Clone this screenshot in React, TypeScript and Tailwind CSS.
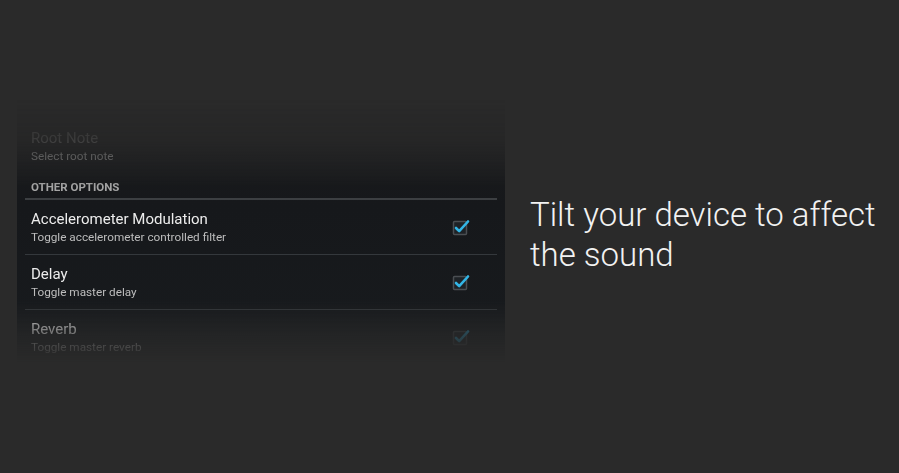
import React from "react";

const CheckBox = ({ dim = false }: { dim?: boolean }) => (
  <svg width="20" height="20" viewBox="0 0 20 20" className={dim ? "opacity-60" : ""}>
    <rect x="1.5" y="4.5" width="13" height="13" rx="1" fill="#1e2226" stroke="#4a4e52" strokeWidth="1.5" />
    <path d="M4 11l3.2 3.2L16 4.5" fill="none" stroke="#33b5e5" strokeWidth="2.6" strokeLinecap="round" strokeLinejoin="round" />
  </svg>
);

const rows = [
  { title: "Accelerometer Modulation", sub: "Toggle accelerometer controlled filter" },
  { title: "Delay", sub: "Toggle master delay" },
  { title: "Reverb", sub: "Toggle master reverb" },
];

export default function App() {
  return (
    <div className="h-[473px] w-full bg-[#2a2a2a] flex font-[Roboto,sans-serif] overflow-hidden">
      {/* settings panel */}
      <div className="ml-[17px] mt-[100px] w-[488px] h-[265px] bg-[linear-gradient(to_bottom,#1b1b1c_0%,#16181b_40%,#181b1e_100%)] [mask-image:linear-gradient(to_bottom,transparent_0px,rgba(0,0,0,0.2)_38px,rgba(0,0,0,0.55)_62px,black_88px,black_200px,rgba(0,0,0,0.35)_235px,transparent_262px)]">
        <div className="pt-[29px] px-[14px]">
          <div className="text-[15px] leading-[18px] text-[#7a7a7a]">Root Note</div>
          <div className="mt-[2px] text-[11.75px] leading-[14px] text-[#929292]">Select root note</div>
          <div className="mt-[17px] text-[11.5px] leading-[14px] font-bold text-[#a6a6a6]">OTHER OPTIONS</div>
        </div>
        <div className="mx-[8px] mt-[4px] h-[2px] bg-[#3c3f42]" />
        {rows.map((r, i) => (
          <div key={r.title} className="mx-[8px]">
            <div className="flex items-center justify-between pl-[6px] pr-[25px] pt-[10px] pb-[10px]">
              <div>
                <div className="text-[15px] leading-[18px] text-[#ececec]">{r.title}</div>
                <div className="mt-[2px] text-[11.75px] leading-[14px] text-[#bdbdbd]">{r.sub}</div>
              </div>
              <CheckBox dim={i === 2} />
            </div>
            <div className="h-px bg-[#34383c]" />
          </div>
        ))}
      </div>

      {/* caption */}
      <div className="ml-[25px] pt-[195px]">
        <p className="text-[33px] leading-[40px] font-light text-[#f2f2f2] w-[365px]">
          Tilt your device to affect the sound
        </p>
      </div>
    </div>
  );
}
